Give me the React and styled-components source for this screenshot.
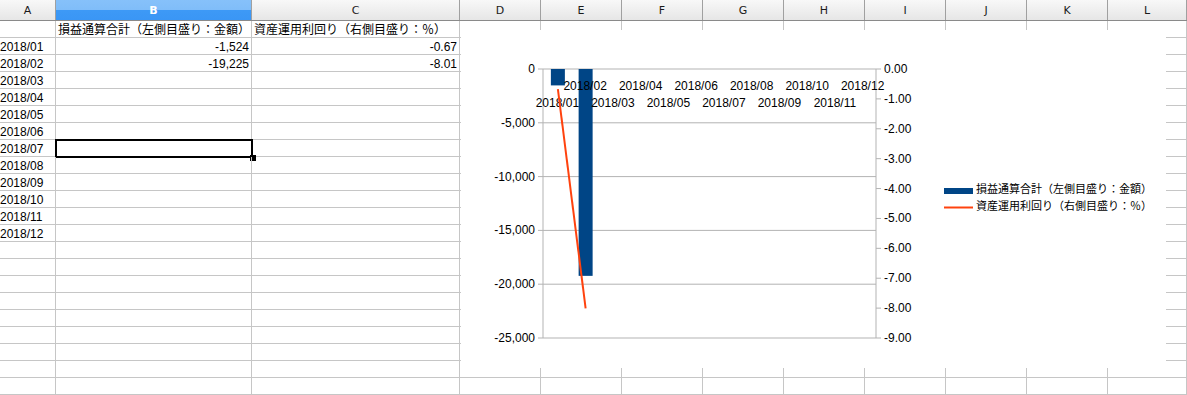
import React from 'react'
import styled, { createGlobalStyle } from 'styled-components'

const GlobalStyle = createGlobalStyle`
  html, body {
    margin: 0;
    padding: 0;
    background: #ffffff;
    overflow: hidden;
  }
`

const COLS = [
  { name: 'A', w: 56 },
  { name: 'B', w: 196 },
  { name: 'C', w: 208 },
  { name: 'D', w: 81 },
  { name: 'E', w: 81 },
  { name: 'F', w: 81 },
  { name: 'G', w: 81 },
  { name: 'H', w: 81 },
  { name: 'I', w: 81 },
  { name: 'J', w: 81 },
  { name: 'K', w: 81 },
  { name: 'L', w: 79 },
]

const LABEL_L = '損益通算合計（左側目盛り：金額）'
const LABEL_R = '資産運用利回り（右側目盛り：％）'

const months = Array.from({ length: 12 }, (_, i) => `2018/${String(i + 1).padStart(2, '0')}`)

const DATA = [
  ['', LABEL_L, LABEL_R],
  ['2018/01', '-1,524', '-0.67'],
  ['2018/02', '-19,225', '-8.01'],
  ...months.slice(2).map(m => [m, '', '']),
]

const ROW_COUNT = 23

let Sheet = styled.div`
  position: relative;
  width: 1187px;
  height: 395px;
  overflow: hidden;
  font-family: "Liberation Sans", "Noto Sans CJK JP", sans-serif;
`

let HeaderRow = styled.div`
  display: flex;
  height: 21px;
  box-sizing: border-box;
  border-bottom: 1px solid #8a8a8a;
`

let HeaderCell = styled.div`
  width: ${p => p.$w}px;
  flex: none;
  box-sizing: border-box;
  border-right: 1px solid #a0a0a0;
  display: flex;
  align-items: center;
  justify-content: center;
  font-family: "DejaVu Sans", sans-serif;
  font-size: 11px;
  font-weight: ${p => (p.$active ? 'bold' : 'normal')};
  color: ${p => (p.$active ? '#ffffff' : '#1a1a1a')};
  background: ${p =>
    p.$active
      ? 'linear-gradient(#86c1fa 0%, #80bdf9 48%, #3d99f6 52%, #3a96f5 100%)'
      : 'linear-gradient(#f8f8f8 0%, #efefef 50%, #e6e6e6 100%)'};
`

let Row = styled.div`
  display: flex;
  height: 17px;
  box-sizing: border-box;
  border-bottom: 1px solid #c6c6c6;
`

let Cell = styled.div`
  position: relative;
  width: ${p => p.$w}px;
  flex: none;
  box-sizing: border-box;
  border-right: 1px solid #c6c6c6;
  padding: 1px ${p => (p.$align === 'right' ? '2px' : '0')} 0 ${p => (p.$first ? '0' : '2px')};
  text-align: ${p => p.$align};
  font-size: 12px;
  line-height: 16px;
  color: #000000;
  white-space: nowrap;
`

let Selection = styled.div`
  position: absolute;
  left: -1px;
  top: -1px;
  width: 198px;
  height: 19px;
  box-sizing: border-box;
  border: 2px solid #000000;
  pointer-events: none;
`

let Handle = styled.div`
  position: absolute;
  left: 194px;
  top: 15px;
  width: 6px;
  height: 6px;
  background: #000000;
`

let ChartFrame = styled.div`
  position: absolute;
  left: 461px;
  top: 30px;
  width: 705px;
  height: 338px;
  background: #ffffff;
`

const PLOT = { left: 543, right: 876, top: 69, bottom: 338 }
const H = PLOT.bottom - PLOT.top
const yL = v => PLOT.top + (-v / 25000) * H
const yR = v => PLOT.top + (-v / 9) * H
const catW = (PLOT.right - PLOT.left) / 12
const catX = i => PLOT.left + (i + 0.5) * catW

const GRID = '#b3b3b3'
const BAR = '#004586'
const LINE = '#ff420e'

function Chart() {
  let leftTicks = [0, -5000, -10000, -15000, -20000, -25000]
  let rightTicks = [0, -1, -2, -3, -4, -5, -6, -7, -8, -9]
  let bars = [-1524, -19225]
  let rates = [-0.67, -8.01]
  return (
    <ChartFrame>
      <svg width="705" height="338" viewBox="461 30 705 338" fontFamily='"Liberation Sans", "Noto Sans CJK JP", sans-serif'>
        {leftTicks.map(v => (
          <g key={v}>
            <line x1={538} x2={PLOT.right} y1={yL(v)} y2={yL(v)} stroke={GRID} strokeWidth="1" />
            <text x={535} y={yL(v)} fontSize="12" textAnchor="end" dominantBaseline="central" fill="#000">
              {v === 0 ? '0' : v.toLocaleString('en-US')}
            </text>
          </g>
        ))}
        <line x1={PLOT.left} x2={PLOT.left} y1={PLOT.top} y2={PLOT.bottom} stroke={GRID} strokeWidth="1" />
        <line x1={PLOT.right} x2={PLOT.right} y1={PLOT.top} y2={PLOT.bottom} stroke={GRID} strokeWidth="1" />
        {rightTicks.map(v => (
          <g key={v}>
            <line x1={PLOT.right} x2={PLOT.right + 5} y1={yR(v)} y2={yR(v)} stroke={GRID} strokeWidth="1" />
            <text x={884} y={yR(v)} fontSize="12" dominantBaseline="central" fill="#000">
              {v.toFixed(2)}
            </text>
          </g>
        ))}
        {bars.map((v, i) => (
          <rect key={i} x={catX(i) - 6} y={PLOT.top} width="14" height={yL(v) - PLOT.top} fill={BAR} />
        ))}
        {months.map((m, i) => (
          <text key={m} x={catX(i) + 0.5} y={i % 2 === 0 ? 107 : 90} fontSize="12" textAnchor="middle" fill="#000">
            {m}
          </text>
        ))}
        <polyline
          points={rates.map((v, i) => `${catX(i) + 1},${yR(v)}`).join(' ')}
          fill="none"
          stroke={LINE}
          strokeWidth="2"
        />
        <rect x="944" y="188" width="29" height="6" fill={BAR} />
        <text x="976" y="189" fontSize="11" dominantBaseline="central" fill="#000">{LABEL_L}</text>
        <line x1="944" x2="973" y1="207.5" y2="207.5" stroke={LINE} strokeWidth="2" />
        <text x="976" y="206" fontSize="11" dominantBaseline="central" fill="#000">{LABEL_R}</text>
      </svg>
    </ChartFrame>
  )
}

export default function App() {
  return (
    <Sheet>
      <GlobalStyle />
      <HeaderRow>
        {COLS.map(c => (
          <HeaderCell key={c.name} $w={c.w} $active={c.name === 'B'}>{c.name}</HeaderCell>
        ))}
      </HeaderRow>
      {Array.from({ length: ROW_COUNT }, (_, r) => {
        let vals = DATA[r] || ['', '', '']
        return (
          <Row key={r}>
            {COLS.map((c, ci) => {
              let text = ci < 3 ? vals[ci] : ''
              let align = r > 0 && (ci === 1 || ci === 2) ? 'right' : 'left'
              return (
                <Cell key={c.name} $w={c.w} $align={align} $first={ci === 0}>
                  {text}
                  {r === 7 && ci === 1 && (
                    <>
                      <Selection />
                      <Handle />
                    </>
                  )}
                </Cell>
              )
            })}
          </Row>
        )
      })}
      <Chart />
    </Sheet>
  )
}
